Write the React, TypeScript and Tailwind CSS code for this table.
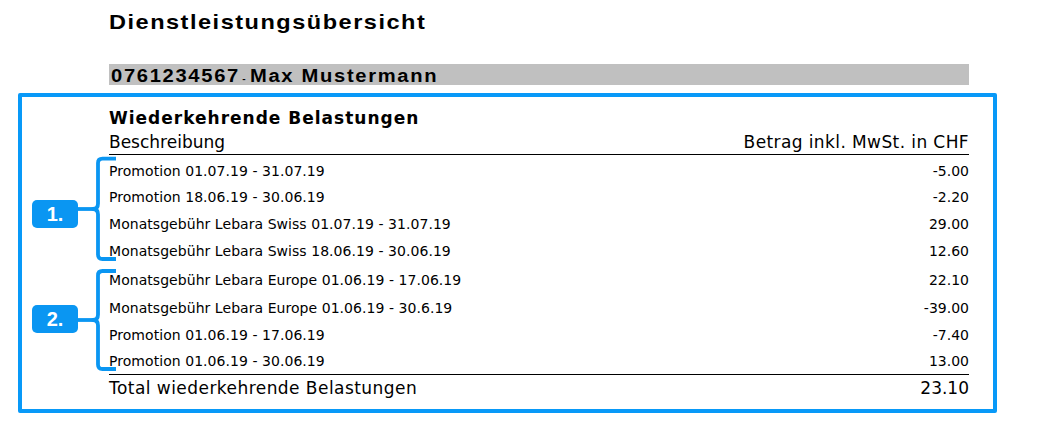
import React from "react";

const rows: { d: string; a: string; h: string }[] = [
  { d: "Promotion 01.07.19 - 31.07.19", a: "-5.00", h: "h-[26px]" },
  { d: "Promotion 18.06.19 - 30.06.19", a: "-2.20", h: "h-[26px]" },
  { d: "Monatsgebühr Lebara Swiss 01.07.19 - 31.07.19", a: "29.00", h: "h-[27px]" },
  { d: "Monatsgebühr Lebara Swiss 18.06.19 - 30.06.19", a: "12.60", h: "h-[28px]" },
  { d: "Monatsgebühr Lebara Europe 01.06.19 - 17.06.19", a: "22.10", h: "h-[29px]" },
  { d: "Monatsgebühr Lebara Europe 01.06.19 - 30.6.19", a: "-39.00", h: "h-[28px]" },
  { d: "Promotion 01.06.19 - 17.06.19", a: "-7.40", h: "h-[26px]" },
  { d: "Promotion 01.06.19 - 30.06.19", a: "13.00", h: "h-[26px]" },
];

function Annotations() {
  return (
    <>
      <svg
        className="absolute left-0 top-0 pointer-events-none"
        width="1058"
        height="422"
        viewBox="0 0 1058 422"
        fill="none"
      >
        <g stroke="#0a96f2" strokeWidth="3.8" strokeLinecap="butt" strokeLinejoin="round">
          <path d="M116 158.6 H102.5 Q98 158.6 98 163 V203.5 Q98 209 93 209 Q98 209 98 214.5 V254.5 Q98 259 102.5 259 H116" />
          <path d="M78 209 H94" />
          <path d="M116 271 H102.5 Q98 271 98 275.5 V314.5 Q98 320 93 320 Q98 320 98 325.5 V364.5 Q98 369 102.5 369 H116" />
          <path d="M78 320 H94" />
        </g>
      </svg>
      <div className="absolute left-[32px] top-[200px] w-[46px] h-[28px] rounded-[5px] bg-[#0a96f2] flex items-center justify-center text-white font-['Liberation_Sans',Arial,sans-serif] font-bold text-[20px] leading-none">
        1.
      </div>
      <div className="absolute left-[32px] top-[305px] w-[46px] h-[28px] rounded-[5px] bg-[#0a96f2] flex items-center justify-center text-white font-['Liberation_Sans',Arial,sans-serif] font-bold text-[20px] leading-none">
        2.
      </div>
    </>
  );
}

export default function App() {
  return (
    <div className="relative w-[1058px] h-[422px] bg-white overflow-hidden text-black">
      <div className="pl-[109px] pt-[10px] h-[44px]">
        <div className="inline-block origin-left scale-x-[1.12] whitespace-nowrap font-['Liberation_Sans',Arial,sans-serif] font-bold text-[21px] leading-[24px] tracking-[1.35px]">
          Dienstleistungsübersicht
        </div>
      </div>
      <div className="mt-[20px] ml-[109px] w-[860px] h-[21px] bg-[#c0c0c0] pl-[2px]">
        <div className="inline-block origin-left scale-x-[1.12] whitespace-nowrap font-['Liberation_Sans',Arial,sans-serif] font-bold text-[18px] leading-[21px] tracking-[1.5px]">
          0761234567<span className="text-[9px] tracking-normal pl-[2px] pr-[4px]">-</span>Max Mustermann
        </div>
      </div>
      <div className="mt-[8px] ml-[18px] w-[979px] h-[320px] border-[4px] border-[#0899f8] rounded-[2px] pl-[87px] pt-[11px]">
        <div className="w-[860px] font-['DejaVu_Sans',Verdana,sans-serif]">
          <div className="font-bold text-[17px] leading-[20px] tracking-[1px]">Wiederkehrende Belastungen</div>
          <div className="mt-[4px] h-[23px] border-b border-black flex justify-between text-[17px] leading-[20px]">
            <span>Beschreibung</span>
            <span className="tracking-[0.4px]">Betrag inkl. MwSt. in CHF</span>
          </div>
          <div className="pt-[3px] text-[14px] leading-[16px]">
            {rows.map((r, i) => (
              <div key={i} className={`${r.h} flex items-center justify-between`}>
                <span className="tracking-[0.05px]">{r.d}</span>
                <span>{r.a}</span>
              </div>
            ))}
          </div>
          <div className="border-t border-black pt-[3px] flex justify-between text-[17px] leading-[20px]">
            <span className="tracking-[0.45px]">Total wiederkehrende Belastungen</span>
            <span>23.10</span>
          </div>
        </div>
      </div>
      <Annotations />
    </div>
  );
}
